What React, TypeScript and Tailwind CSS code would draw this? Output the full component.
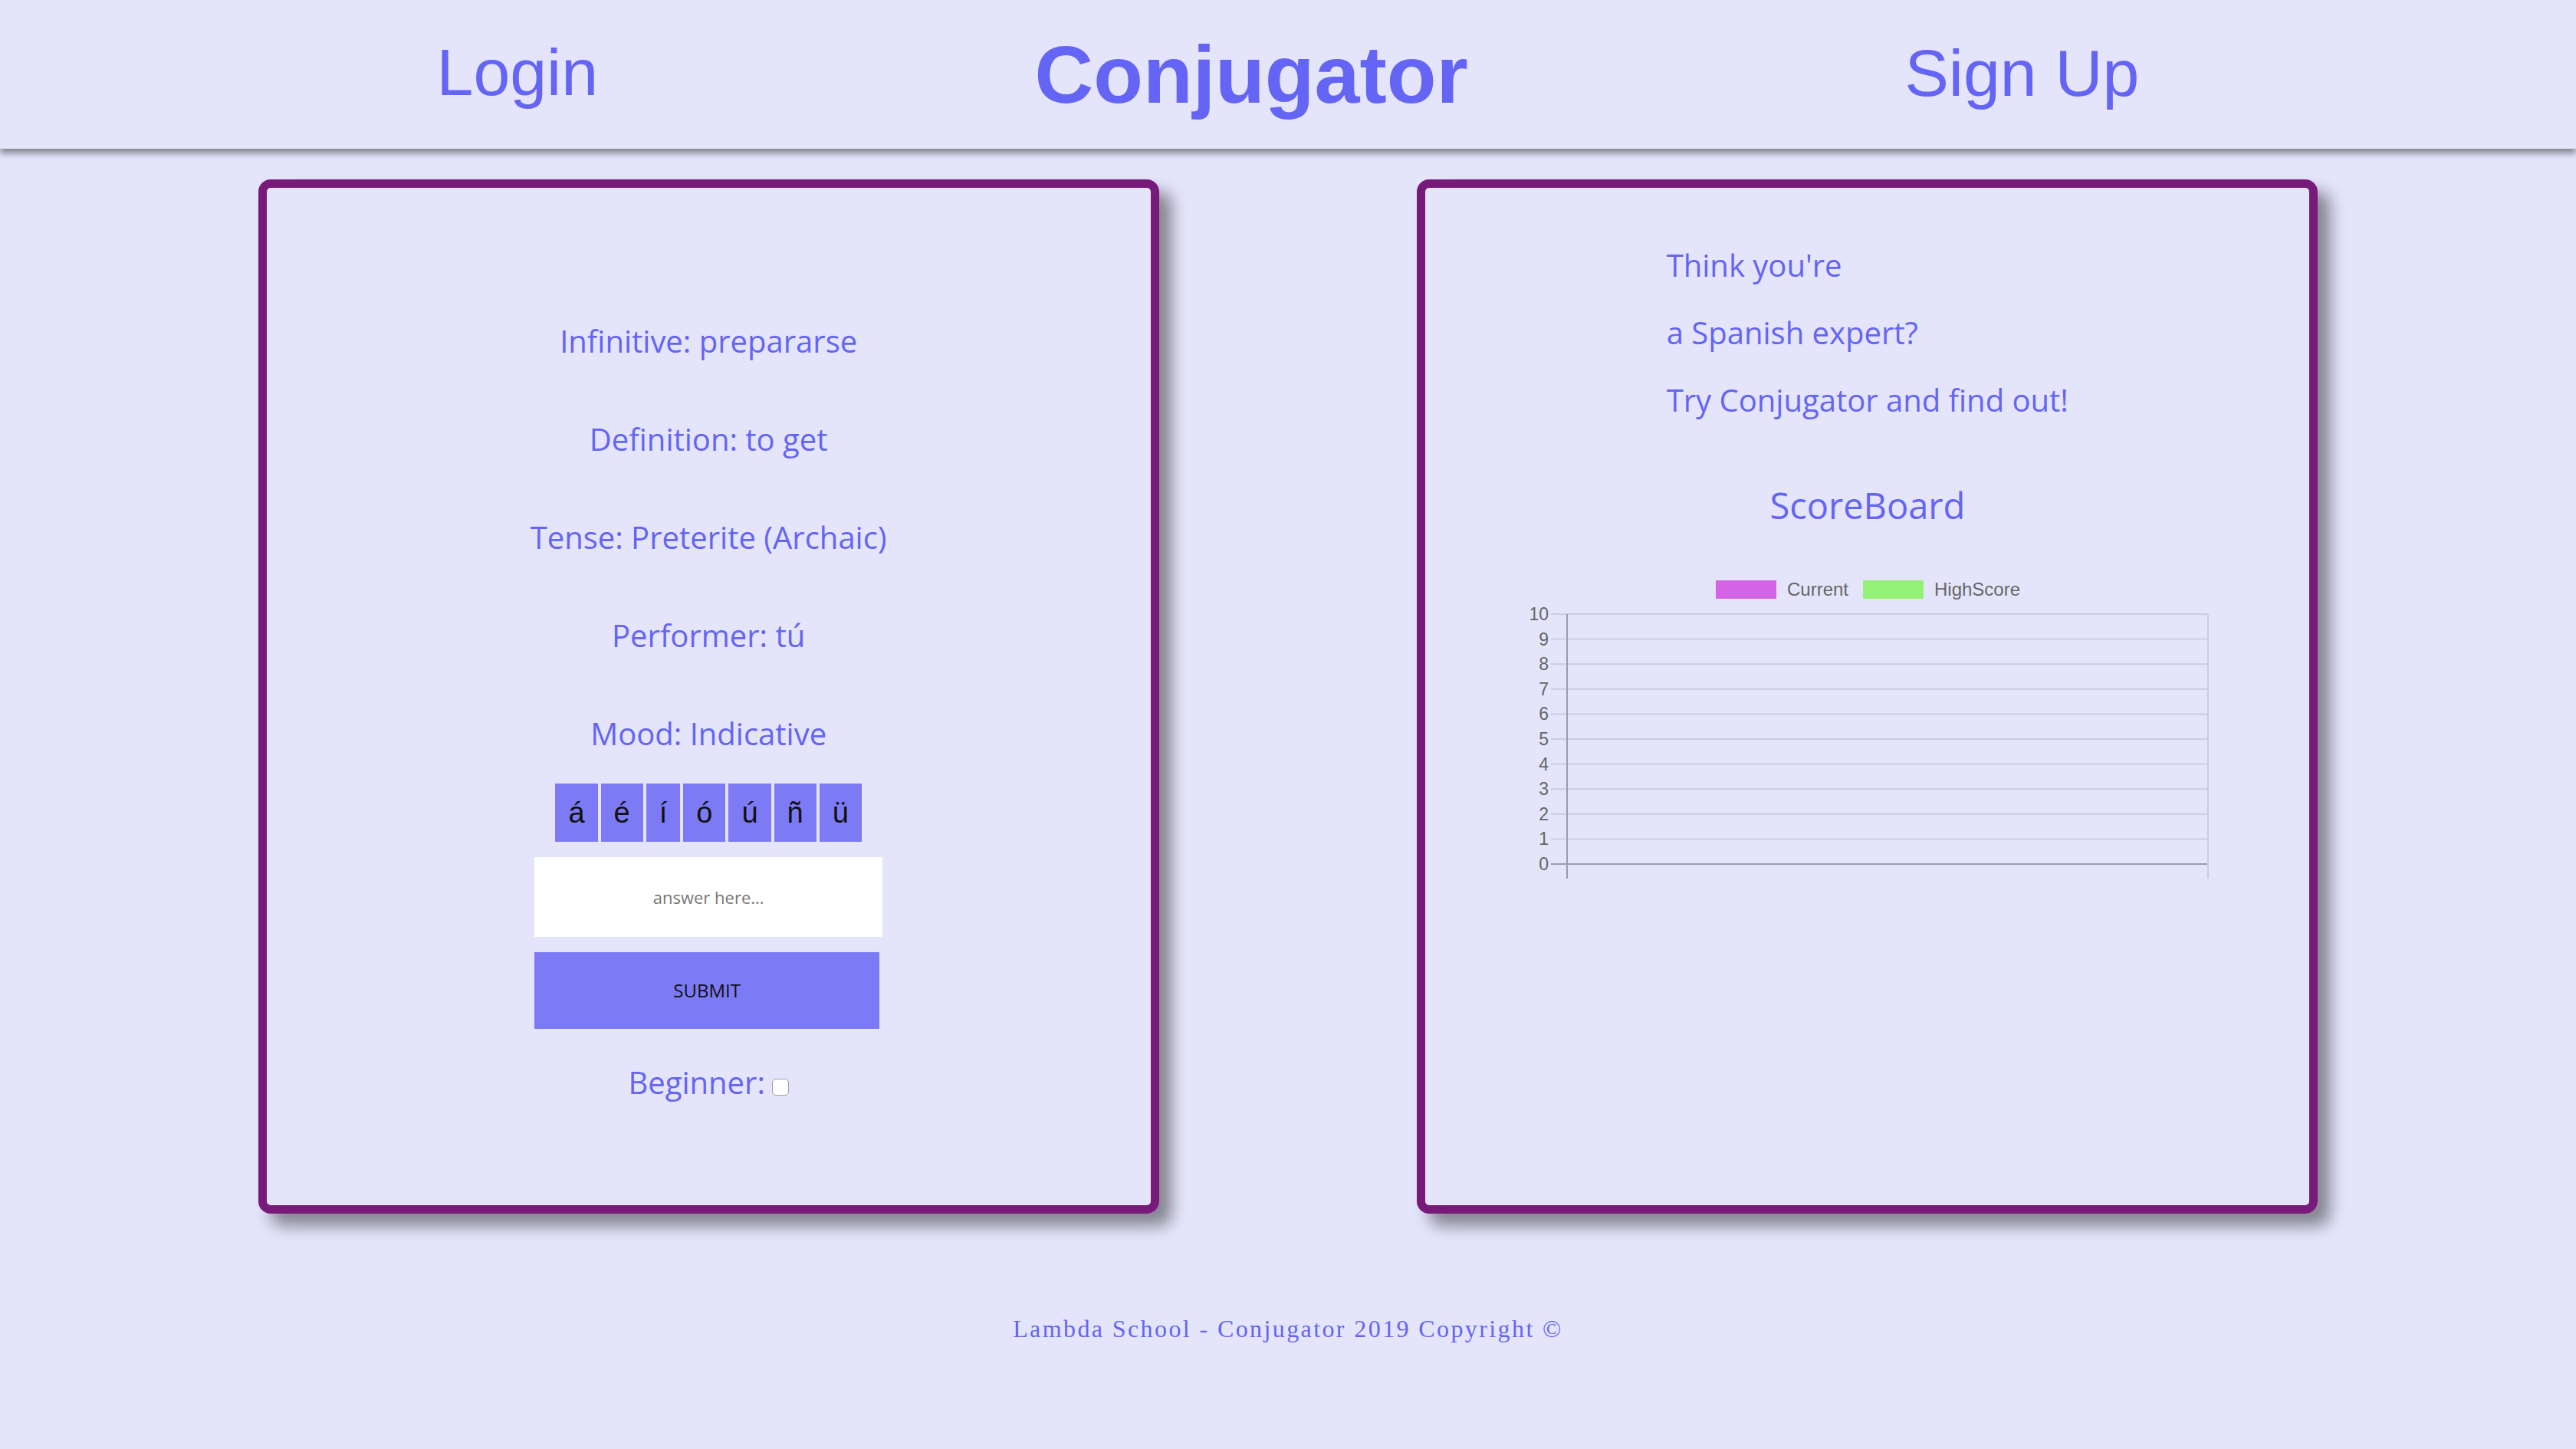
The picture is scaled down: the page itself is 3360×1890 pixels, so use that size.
import React from 'react';

const accents = ['á', 'é', 'í', 'ó', 'ú', 'ñ', 'ü'];

const ScoreChart: React.FC = () => {
  const ticks = Array.from({ length: 11 }, (_, i) => 10 - i);
  const top = 62;
  const step = 32.6;
  return (
    <svg width="900" height="420" viewBox="0 0 900 420" className="block">
      {/* legend */}
      <rect x="252" y="18" width="79" height="24" fill="#d563e5" />
      <text x="345" y="38" fontSize="24" fill="#666" fontFamily="'Liberation Sans', Arial, sans-serif">
        Current
      </text>
      <rect x="444" y="18" width="79" height="24" fill="#93f275" />
      <text x="537" y="38" fontSize="24" fill="#666" fontFamily="'Liberation Sans', Arial, sans-serif">
        HighScore
      </text>

      {/* grid */}
      {ticks.map((t, i) => {
        const y = top + i * step;
        return (
          <g key={t}>
            <line x1="37" y1={y} x2="894" y2={y} stroke={t === 0 ? '#9b9bab' : '#cdcde1'} strokeWidth="2" />
            <text
              x="34"
              y={y + 8}
              textAnchor="end"
              fontSize="23"
              fill="#666"
              fontFamily="'Liberation Sans', Arial, sans-serif"
            >
              {t}
            </text>
          </g>
        );
      })}
      <line x1="58" y1={top} x2="58" y2="407" stroke="#9b9bab" strokeWidth="2" />
      <line x1="894" y1={top} x2="894" y2="407" stroke="#cdcde1" strokeWidth="2" />
    </svg>
  );
};

const App: React.FC = () => {
  const infoLines = [
    'Infinitive: prepararse',
    'Definition: to get',
    'Tense: Preterite (Archaic)',
    'Performer: tú',
    'Mood: Indicative'
  ];

  return (
    <div className="min-h-screen bg-[#e4e4fa] text-[#6464f5] font-['Open_Sans',sans-serif]">
      <header className="relative z-10 h-[194px] flex items-center justify-evenly bg-[#e4e4fa] shadow-[0_6px_8px_rgba(0,0,0,0.42)] font-['Liberation_Sans',Arial,sans-serif]">
        <a className="text-[86px] leading-none -mt-[6px] cursor-pointer">Login</a>
        <h1 className="text-[106px] leading-none font-bold">Conjugator</h1>
        <a className="text-[86px] leading-none -mt-[4px] cursor-pointer">Sign Up</a>
      </header>

      <main className="mt-[40px] flex justify-evenly">
        {/* game card */}
        <section className="w-[1175px] h-[1349px] border-[11px] border-[#771a7a] rounded-[16px] shadow-[16px_16px_20px_rgba(0,0,0,0.42)] flex flex-col items-center pt-[172px] font-medium">
          <div className="flex flex-col items-center gap-[72px]">
            {infoLines.map((line) => (
              <div key={line} className="h-[56px] leading-[56px] text-[40px]">
                {line}
              </div>
            ))}
          </div>

          <div className="mt-[37px] flex gap-1 font-normal">
            {accents.map((c) => (
              <button
                key={c}
                className="h-[76px] px-[17px] bg-[#7d7af5] text-[#111] text-[38px] leading-none font-['Liberation_Sans',Arial,sans-serif] flex items-center justify-center"
              >
                {c}
              </button>
            ))}
          </div>

          <div className="w-[454px] flex flex-col items-start">
            <input
              placeholder="answer here..."
              className="mt-[20px] w-[454px] h-[104px] bg-white text-center text-[22px] placeholder:text-[#777] outline-none"
            />
            <button className="mt-[20px] w-[450px] h-[100px] bg-[#7d7af5] text-[#111] text-[24px]">SUBMIT</button>
          </div>

          <label className="mt-[42px] flex items-start">
            <span className="h-[56px] leading-[56px] text-[40px]">Beginner:</span>
            <input
              type="checkbox"
              className="appearance-none ml-[9px] mt-[23px] w-[22px] h-[22px] bg-white border border-[#a0a0a0] rounded-[5px]"
            />
          </label>
        </section>

        {/* intro + scoreboard card */}
        <section className="w-[1175px] h-[1349px] border-[11px] border-[#771a7a] rounded-[16px] shadow-[16px_16px_20px_rgba(0,0,0,0.42)] flex flex-col items-center pt-[73px] font-medium">
          <div className="w-fit flex flex-col gap-[32px] text-left text-[40px]">
            <p className="h-[56px] leading-[56px]">Think you're</p>
            <p className="h-[56px] leading-[56px]">a Spanish expert?</p>
            <p className="h-[56px] leading-[56px]">Try Conjugator and find out!</p>
          </div>

          <h2 className="mt-[77px] h-[64px] leading-[64px] text-[47px]">ScoreBoard</h2>

          <div className="mt-[48px]">
            <ScoreChart />
          </div>
        </section>
      </main>

      <footer className="mt-[132px] pb-[100px] text-center text-[32px] leading-[37px] tracking-[2.4px] font-['Liberation_Serif','Times_New_Roman',serif]">
        Lambda School - Conjugator 2019 Copyright ©
      </footer>
    </div>
  );
};

export default App;
